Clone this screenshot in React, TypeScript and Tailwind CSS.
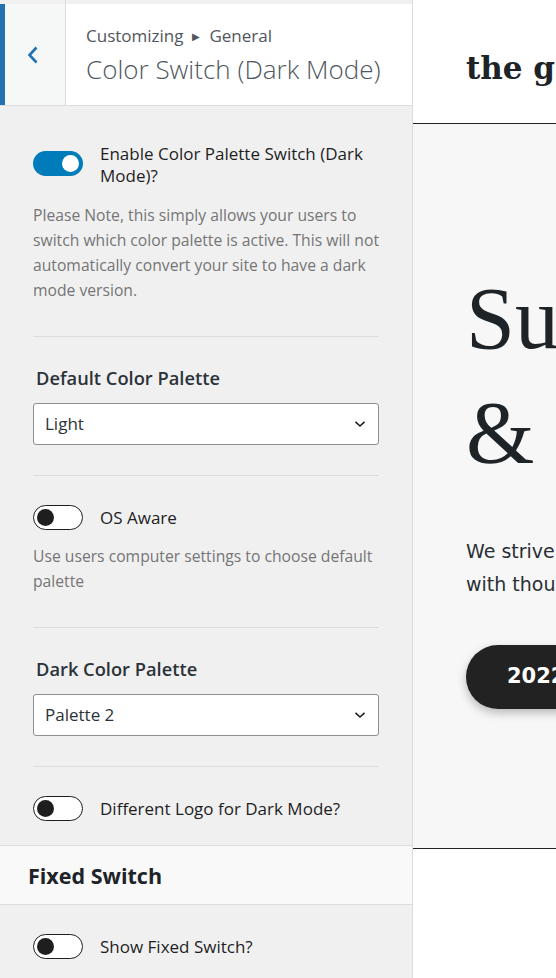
import React from "react";

function Toggle({ on }: { on?: boolean }) {
  if (on) {
    return (
      <div className="relative w-[50px] h-[25px] shrink-0 rounded-full bg-[#007cba]">
        <div className="absolute right-[4px] top-[4px] w-[17px] h-[17px] rounded-full bg-white" />
      </div>
    );
  }
  return (
    <div className="relative w-[50px] h-[25px] shrink-0 rounded-full bg-white border-[1.5px] border-[#1e1e1e]">
      <div className="absolute left-[3px] top-[2.5px] w-[17px] h-[17px] rounded-full bg-[#1e1e1e]" />
    </div>
  );
}

function Select({ value }: { value: string }) {
  return (
    <div className="flex items-center justify-between h-[42px] bg-white border border-[#8c8f94] rounded-[3px] pl-[11px] pr-[12px]">
      <span className="text-[17px] text-[#2c3338]">{value}</span>
      <svg width="12" height="8" viewBox="0 0 12 8" fill="none">
        <path d="M1.5 1.8 L6 6 L10.5 1.8" stroke="#1e1e1e" strokeWidth="1.6" />
      </svg>
    </div>
  );
}

function Sep() {
  return <div className="h-px bg-[#dcdcde]" />;
}

export default function App() {
  return (
    <div className="flex w-[556px] h-[978px] overflow-hidden bg-white">
      {/* Sidebar */}
      <div className="w-[413px] shrink-0 h-full bg-[#f0f0f1] border-r border-[#dcdcde] font-['Open_Sans',sans-serif] flex flex-col">
        {/* Header */}
        <div className="flex h-[106px] border-b border-[#dcdcde] shrink-0">
          <div className="w-[66px] shrink-0 flex flex-col border-r border-[#dcdcde]">
            <div className="h-[4px] bg-[#f0f0f1]" />
            <div className="flex-1 border-l-[5px] border-[#2271b1] bg-[#f6f7f7] flex items-center justify-center pr-[4px]">
              <svg width="12" height="18" viewBox="0 0 12 18" fill="none">
                <path d="M9.5 1.5 L2.5 9 L9.5 16.5" stroke="#2271b1" strokeWidth="2.6" />
              </svg>
            </div>
          </div>
          <div className="flex-1 flex flex-col">
            <div className="h-[4px] bg-[#f0f0f1]" />
            <div className="flex-1 bg-white pl-[20px] pt-[18px]">
              <div className="flex items-center text-[17px] leading-[28px] text-[#50575e]">
                <span>Customizing</span>
                <span className="text-[10px] mx-[9px]">▶</span>
                <span>General</span>
              </div>
              <div className="text-[26px] leading-[34px] font-light text-[#50575e] mt-[2px]">
                Color Switch (Dark Mode)
              </div>
            </div>
          </div>
        </div>

        {/* Content */}
        <div className="px-[33px] pt-[37px]">
          <div className="flex items-start gap-[17px]">
            <div className="mt-[8px]">
              <Toggle on />
            </div>
            <div className="text-[17px] leading-[22px] text-[#1e1e1e]">
              Enable Color Palette Switch (Dark
              <br />
              Mode)?
            </div>
          </div>
          <div className="mt-[16px] text-[15.7px] leading-[25px] text-[#757575]">
            Please Note, this simply allows your users to
            <br />
            switch which color palette is active. This will not
            <br />
            automatically convert your site to have a dark
            <br />
            mode version.
          </div>
          <div className="mt-[33px]">
            <Sep />
          </div>

          <div className="mt-[29px] pl-[3px] text-[18.3px] leading-[24px] font-semibold text-[#2c3338]">
            Default Color Palette
          </div>
          <div className="mt-[13px]">
            <Select value="Light" />
          </div>
          <div className="mt-[30px]">
            <Sep />
          </div>

          <div className="mt-[29px] flex items-center gap-[17px]">
            <Toggle />
            <span className="text-[17px] leading-[22px] text-[#1e1e1e]">OS Aware</span>
          </div>
          <div className="mt-[14px] text-[15.7px] leading-[25px] text-[#757575]">
            Use users computer settings to choose default
            <br />
            palette
          </div>
          <div className="mt-[33px]">
            <Sep />
          </div>

          <div className="mt-[29px] pl-[3px] text-[18.3px] leading-[24px] font-semibold text-[#2c3338]">
            Dark Color Palette
          </div>
          <div className="mt-[13px]">
            <Select value="Palette 2" />
          </div>
          <div className="mt-[30px]">
            <Sep />
          </div>

          <div className="mt-[29px] flex items-center gap-[17px]">
            <Toggle />
            <span className="text-[17px] leading-[22px] text-[#1e1e1e]">Different Logo for Dark Mode?</span>
          </div>
        </div>

        <div className="mt-[24px] h-[60px] shrink-0 bg-[#f9f9f9] border-y border-[#dcdcde] flex items-center pl-[28px] pt-[2px]">
          <span className="text-[21.5px] font-bold text-[#1d2327]">Fixed Switch</span>
        </div>

        <div className="px-[33px] pt-[29px]">
          <div className="flex items-center gap-[17px]">
            <Toggle />
            <span className="text-[17px] leading-[22px] text-[#1e1e1e]">Show Fixed Switch?</span>
          </div>
        </div>
      </div>

      {/* Preview */}
      <div className="flex-1 min-w-0 h-full overflow-hidden flex flex-col bg-white">
        <div className="h-[124px] shrink-0 border-b border-[#222] flex items-center pl-[53px] pt-[14px]">
          <span className="whitespace-nowrap font-['DejaVu_Serif',serif] font-bold text-[31px] text-[#1d2327]">
            the gallery
          </span>
        </div>
        <div className="h-[725px] shrink-0 bg-[#f7f7f7] border-b border-[#222] pl-[53px] pt-[138px]">
          <div className="whitespace-nowrap font-['Liberation_Serif',serif] text-[88px] leading-[114px] text-[#1d2327]">
            Sustainable
            <br />
            &amp; Timeless
          </div>
          <div className="mt-[45px] whitespace-nowrap font-['DejaVu_Sans',sans-serif] text-[19px] leading-[33px] text-[#2a2f36]">
            We strive to create
            <br />
            with thoughtful care
          </div>
          <div className="mt-[44px] h-[64px] w-[220px] rounded-full bg-[#222] shadow-[0_4px_10px_rgba(0,0,0,0.25)] flex items-center pl-[41px]">
            <span className="whitespace-nowrap font-['DejaVu_Sans',sans-serif] font-bold text-[21px] text-white">
              2022 Collection
            </span>
          </div>
        </div>
      </div>
    </div>
  );
}
